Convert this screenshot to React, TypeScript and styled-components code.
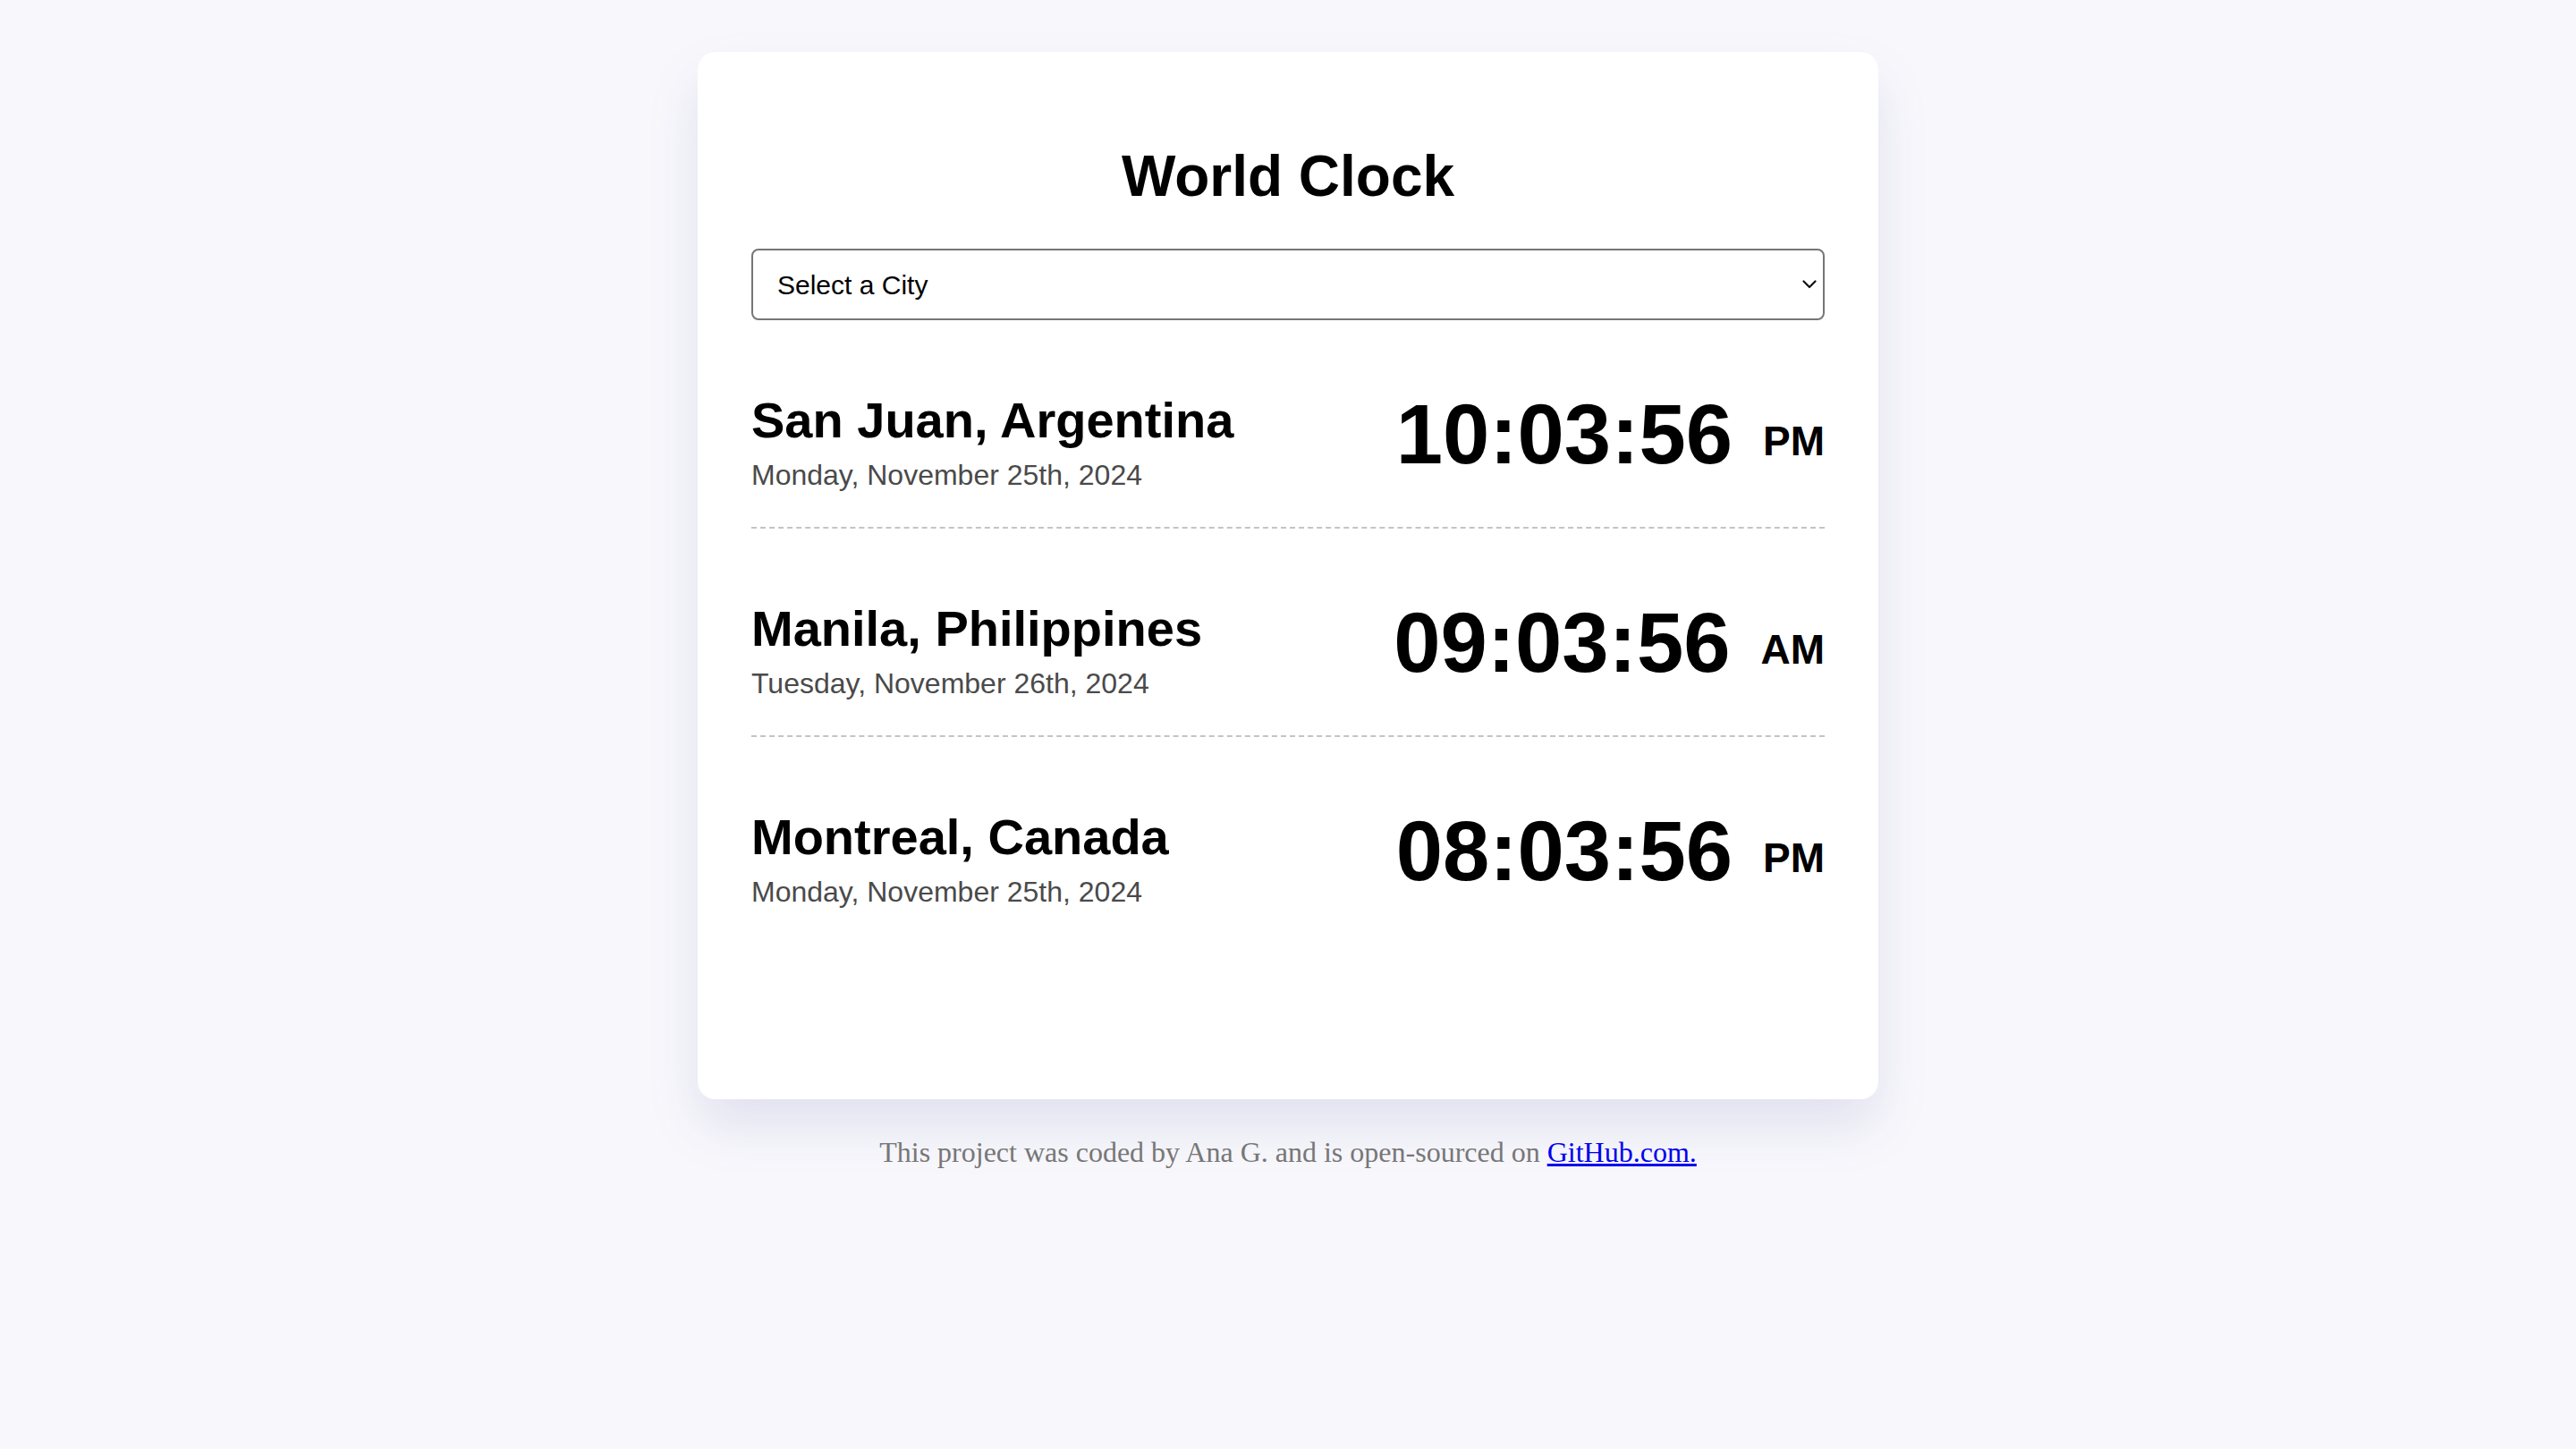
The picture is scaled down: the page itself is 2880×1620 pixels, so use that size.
import React from 'react';
import styled, { createGlobalStyle } from 'styled-components';

const GlobalStyle = createGlobalStyle`
  html, body {
    margin: 0;
    padding: 0;
  }
  body {
    background: #f8f8fc;
    font-family: "Liberation Sans", Arial, Helvetica, sans-serif;
    color: #000;
  }
`;

const Page = styled.div`
  display: flex;
  flex-direction: column;
  align-items: center;
  padding-top: 58px;
  min-height: 1620px;
  box-sizing: border-box;
`;

const Card = styled.main`
  width: 1320px;
  box-sizing: border-box;
  padding: 102px 60px 174px;
  background: #fff;
  border-radius: 20px;
  box-shadow: 0 30px 60px rgba(65, 56, 147, 0.12);
`;

const Title = styled.h1`
  margin: 0 0 44px;
  font-size: 64px;
  line-height: 74px;
  font-weight: 700;
  text-align: center;
`;

const SelectWrap = styled.div`
  position: relative;
  height: 80px;
`;

const CitySelect = styled.select`
  width: 100%;
  height: 80px;
  box-sizing: border-box;
  border: 2px solid #767676;
  border-radius: 8px;
  padding: 0 40px 0 27px;
  background: #fff;
  color: #000;
  font-family: inherit;
  font-size: 30px;
  appearance: none;
  -webkit-appearance: none;
  outline: none;
`;

const Chevron = styled.svg`
  position: absolute;
  right: 9px;
  top: 50%;
  transform: translateY(-50%);
  pointer-events: none;
`;

const Row = styled.div`
  display: flex;
  justify-content: space-between;
  align-items: flex-start;
  padding: 80px 0 39px;
  border-bottom: 2px dashed #c4c4c4;

  &:last-child {
    border-bottom: none;
  }
`;

const CityName = styled.h2`
  margin: 0 0 11px;
  font-size: 56px;
  line-height: 64px;
  font-weight: 700;
`;

const DateText = styled.div`
  font-size: 32px;
  line-height: 37px;
  color: #4a4a4a;
`;

const Time = styled.div`
  font-size: 94px;
  line-height: 96px;
  font-weight: 700;
  white-space: nowrap;
`;

const Meridiem = styled.span`
  font-size: 46px;
  line-height: 46px;
  margin-left: 34px;
  vertical-align: 9px;
`;

const Footer = styled.footer`
  margin-top: 41px;
  font-family: "Liberation Serif", "Times New Roman", serif;
  font-size: 32px;
  line-height: 37px;
  color: #777;
  text-align: center;

  a {
    color: #0000ee;
    text-decoration: underline;
  }
`;

const cities = [
  { name: 'San Juan, Argentina', date: 'Monday, November 25th, 2024', time: '10:03:56', ampm: 'PM' },
  { name: 'Manila, Philippines', date: 'Tuesday, November 26th, 2024', time: '09:03:56', ampm: 'AM' },
  { name: 'Montreal, Canada', date: 'Monday, November 25th, 2024', time: '08:03:56', ampm: 'PM' },
];

export default function App() {
  return (
    <>
      <GlobalStyle />
      <Page>
        <Card>
          <Title>World Clock</Title>
          <SelectWrap>
            <CitySelect defaultValue="">
              <option value="">Select a City</option>
              <option value="current">My current location</option>
              <option value="Europe/Paris">Paris</option>
              <option value="Asia/Tokyo">Tokyo</option>
              <option value="Australia/Sydney">Sydney</option>
            </CitySelect>
            <Chevron width="16" height="10" viewBox="0 0 16 10">
              <polyline points="1.5,1.5 8,8 14.5,1.5" fill="none" stroke="#111" strokeWidth="2.2" strokeLinecap="round" strokeLinejoin="round" />
            </Chevron>
          </SelectWrap>
          {cities.map((c) => (
            <Row key={c.name}>
              <div>
                <CityName>{c.name}</CityName>
                <DateText>{c.date}</DateText>
              </div>
              <Time>
                {c.time}
                <Meridiem>{c.ampm}</Meridiem>
              </Time>
            </Row>
          ))}
        </Card>
        <Footer>
          This project was coded by Ana G. and is open-sourced on{' '}
          <a href="#">GitHub.com.</a>
        </Footer>
      </Page>
    </>
  );
}
